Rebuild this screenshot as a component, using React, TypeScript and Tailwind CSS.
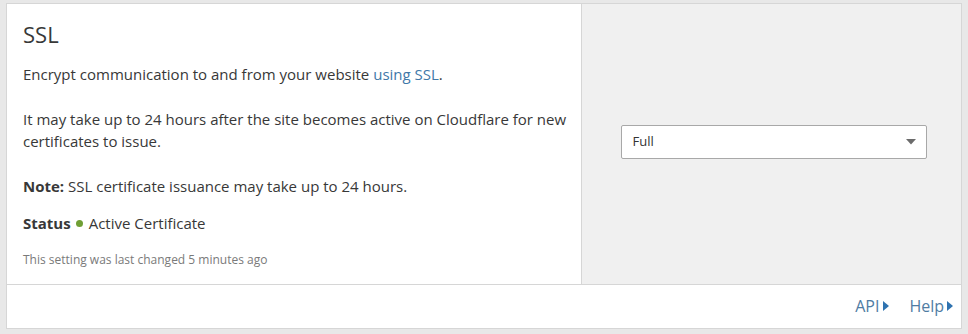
import React from "react";

export default function App() {
  return (
    <div
      className="w-[968px] h-[334px] bg-[#e8e8e8] pt-[3px] pl-[6px] pr-[6px] pb-[5px]"
      style={{ fontFamily: '"Open Sans", "Liberation Sans", sans-serif' }}
    >
      <div className="flex h-[326px] flex-col border border-[#d6d6d6] bg-white">
        <div className="flex h-[281px] border-b border-[#d6d6d6]">
          <div className="w-[575px] border-r border-[#d6d6d6] bg-white pl-[16px] pr-[6px] pt-[15px] text-[#383838]">
            <h3 className="text-[22px] leading-[30px] font-normal">SSL</h3>
            <p className="mt-[14px] text-[15px] leading-[22px]">
              Encrypt communication to and from your website{" "}
              <span className="text-[#3f78a8]">using SSL</span>.
            </p>
            <p className="mt-[23px] text-[15px] leading-[22px]">
              It may take up to 24 hours after the site becomes active on Cloudflare for new certificates to issue.
            </p>
            <p className="mt-[23px] text-[15px] leading-[22px]">
              <span className="font-bold">Note:</span> SSL certificate issuance may take up to 24 hours.
            </p>
            <div className="mt-[15px] flex items-center text-[15px] leading-[22px]">
              <span className="font-bold">Status</span>
              <span className="ml-[5px] mr-[6px] inline-block h-[7px] w-[7px] rounded-full bg-[#6f9f35]"></span>
              <span>Active Certificate</span>
            </div>
            <p className="mt-[16px] text-[12px] leading-[20px] text-[#7a7a7a]">
              This setting was last changed 5 minutes ago
            </p>
          </div>
          <div className="flex flex-1 items-center justify-center bg-[#f0f0f0] pb-[4px] pl-[4px]">
            <div className="flex h-[34px] w-[306px] items-center justify-between rounded-[2px] border border-[#a8a8a8] bg-white pl-[11px] pr-[10px]">
              <span className="text-[13px] text-[#333]">Full</span>
              <svg width="10" height="6" viewBox="0 0 10 6">
                <path d="M0 0 L10 0 L5 5.5 Z" fill="#6b6b6b" />
              </svg>
            </div>
          </div>
        </div>
        <div className="flex flex-1 items-center justify-end pr-[8px] pb-[1px] text-[16px] text-[#4f7ca3]">
          <span className="flex items-center">
            API
            <svg className="ml-[4px]" width="6" height="10" viewBox="0 0 6 10">
              <path d="M0 0 L6 5 L0 10 Z" fill="#2f73b0" />
            </svg>
          </span>
          <span className="ml-[20px] flex items-center">
            Help
            <svg className="ml-[3px]" width="6" height="10" viewBox="0 0 6 10">
              <path d="M0 0 L6 5 L0 10 Z" fill="#2f73b0" />
            </svg>
          </span>
        </div>
      </div>
    </div>
  );
}
